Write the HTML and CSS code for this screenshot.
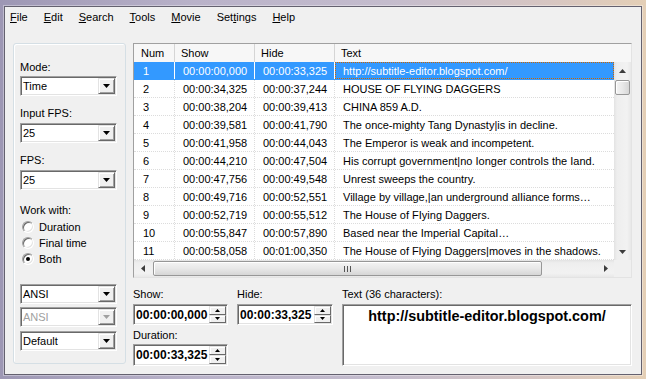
FILE: index.html
```html
<!DOCTYPE html>
<html lang="en">
<head>
    <meta charset="UTF-8">
    <title>Subtitle Workshop</title>
    <link rel="stylesheet" href="styles.css">
</head>
<body>
    <div class="window">
        <!-- menu -->
        <div class="menubar">
            <span><u>F</u>ile</span>
            <span><u>E</u>dit</span>
            <span><u>S</u>earch</span>
            <span><u>T</u>ools</span>
            <span><u>M</u>ovie</span>
            <span>Set<u>t</u>ings</span>
            <span><u>H</u>elp</span>
        </div>

        <div class="main">
            <!-- left options panel -->
            <div class="groupbox">
                <div class="label first">Mode:</div>
                <div class="combo">
                    <span class="value">Time</span>
                    <span class="drop"><svg width="7" height="4"><polygon points="0,0 7,0 3.5,4" fill="#000"/></svg></span>
                </div>
                <div class="label">Input FPS:</div>
                <div class="combo">
                    <span class="value">25</span>
                    <span class="drop"><svg width="7" height="4"><polygon points="0,0 7,0 3.5,4" fill="#000"/></svg></span>
                </div>
                <div class="label">FPS:</div>
                <div class="combo">
                    <span class="value">25</span>
                    <span class="drop"><svg width="7" height="4"><polygon points="0,0 7,0 3.5,4" fill="#000"/></svg></span>
                </div>
                <div class="label work">Work with:</div>
                <div class="radios">
                    <div class="radio"><span class="dot"></span>Duration</div>
                    <div class="radio"><span class="dot"></span>Final time</div>
                    <div class="radio"><span class="dot checked"></span>Both</div>
                </div>
                <div class="encodings">
                    <div class="combo">
                        <span class="value">ANSI</span>
                        <span class="drop"><svg width="7" height="4"><polygon points="0,0 7,0 3.5,4" fill="#000"/></svg></span>
                    </div>
                    <div class="combo disabled">
                        <span class="value">ANSI</span>
                        <span class="drop"><svg width="7" height="4"><polygon points="0,0 7,0 3.5,4" fill="#a0a0a0"/></svg></span>
                    </div>
                    <div class="combo last">
                        <span class="value">Default</span>
                        <span class="drop"><svg width="7" height="4"><polygon points="0,0 7,0 3.5,4" fill="#000"/></svg></span>
                    </div>
                </div>
            </div>

            <div class="right">
                <!-- subtitle list -->
                <div class="listview">
                    <div class="lv-head">
                        <div class="hcell">Num</div>
                        <div class="hcell">Show</div>
                        <div class="hcell">Hide</div>
                        <div class="hcell last">Text</div>
                    </div>
                    <div class="lv-mid">
                        <div class="lv-body">
                            <div class="row sel"><div class="cell num">1</div><div class="cell">00:00:00,000</div><div class="cell">00:00:33,325</div><div class="cell text">http://subtitle-editor.blogspot.com/</div></div>
                            <div class="row"><div class="cell num">2</div><div class="cell">00:00:34,325</div><div class="cell">00:00:37,244</div><div class="cell text">HOUSE OF FLYING DAGGERS</div></div>
                            <div class="row"><div class="cell num">3</div><div class="cell">00:00:38,204</div><div class="cell">00:00:39,413</div><div class="cell text">CHINA 859 A.D.</div></div>
                            <div class="row"><div class="cell num">4</div><div class="cell">00:00:39,581</div><div class="cell">00:00:41,790</div><div class="cell text">The once-mighty Tang Dynasty|is in decline.</div></div>
                            <div class="row"><div class="cell num">5</div><div class="cell">00:00:41,958</div><div class="cell">00:00:44,043</div><div class="cell text">The Emperor is weak and incompetent.</div></div>
                            <div class="row"><div class="cell num">6</div><div class="cell">00:00:44,210</div><div class="cell">00:00:47,504</div><div class="cell text">His corrupt government|no Ionger controIs the Iand.</div></div>
                            <div class="row"><div class="cell num">7</div><div class="cell">00:00:47,756</div><div class="cell">00:00:49,548</div><div class="cell text">Unrest sweeps the country.</div></div>
                            <div class="row"><div class="cell num">8</div><div class="cell">00:00:49,716</div><div class="cell">00:00:52,551</div><div class="cell text">Village by village,|an underground alIiance forms…</div></div>
                            <div class="row"><div class="cell num">9</div><div class="cell">00:00:52,719</div><div class="cell">00:00:55,512</div><div class="cell text">The House of FIying Daggers.</div></div>
                            <div class="row"><div class="cell num">10</div><div class="cell">00:00:55,847</div><div class="cell">00:00:57,890</div><div class="cell text">Based near the ImperiaI CapitaI…</div></div>
                            <div class="row"><div class="cell num">11</div><div class="cell">00:00:58,058</div><div class="cell">00:01:00,350</div><div class="cell text">The House of Flying Daggers|moves in the shadows.</div></div>
                        </div>
                        <div class="vscroll">
                            <div class="arrow"><svg width="7" height="4"><polygon points="3.5,0 7,4 0,4" fill="#3c3c3c"/></svg></div>
                            <div class="vthumb"></div>
                            <div class="arrow bottom"><svg width="7" height="4"><polygon points="0,0 7,0 3.5,4" fill="#3c3c3c"/></svg></div>
                        </div>
                    </div>
                    <div class="lv-foot">
                        <div class="hscroll">
                            <div class="arrow"><svg width="4" height="7"><polygon points="4,0 4,7 0,3.5" fill="#3c3c3c"/></svg></div>
                            <div class="hthumb">
                                <svg width="7" height="6"><rect x="0" y="0" width="1" height="6" fill="#555"/><rect x="3" y="0" width="1" height="6" fill="#555"/><rect x="6" y="0" width="1" height="6" fill="#555"/></svg>
                            </div>
                            <div class="arrow right"><svg width="4" height="7"><polygon points="0,0 4,3.5 0,7" fill="#3c3c3c"/></svg></div>
                        </div>
                        <div class="corner"></div>
                    </div>
                </div>

                <!-- editing fields -->
                <div class="editor">
                    <div class="elabel">Show:</div>
                    <div class="elabel">Hide:</div>
                    <div class="elabel">Text (36 characters):</div>

                    <div class="spin">
                        <span class="time">00:00:00,000</span>
                        <span class="updown">
                            <span class="ud"><svg width="5" height="3"><polygon points="2.5,0 5,3 0,3" fill="#000"/></svg></span>
                            <span class="ud"><svg width="5" height="3"><polygon points="0,0 5,0 2.5,3" fill="#000"/></svg></span>
                        </span>
                    </div>
                    <div class="spin">
                        <span class="time">00:00:33,325</span>
                        <span class="updown">
                            <span class="ud"><svg width="5" height="3"><polygon points="2.5,0 5,3 0,3" fill="#000"/></svg></span>
                            <span class="ud"><svg width="5" height="3"><polygon points="0,0 5,0 2.5,3" fill="#000"/></svg></span>
                        </span>
                    </div>
                    <div class="textbox">http://subtitle-editor.blogspot.com/</div>

                    <div class="elabel dur">Duration:</div>
                    <div class="spin dur-box">
                        <span class="time">00:00:33,325</span>
                        <span class="updown">
                            <span class="ud"><svg width="5" height="3"><polygon points="2.5,0 5,3 0,3" fill="#000"/></svg></span>
                            <span class="ud"><svg width="5" height="3"><polygon points="0,0 5,0 2.5,3" fill="#000"/></svg></span>
                        </span>
                    </div>
                </div>
            </div>
        </div>
    </div>
</body>
</html>
```

FILE: styles.css
```css
/* window frame */
* {
    box-sizing: border-box;
}

body {
    margin: 0;
    width: 646px;
    height: 379px;
    overflow: hidden;
    padding: 6px 0 0 4px;
    background: linear-gradient(90deg, #9d97b4 0%, #b9b2c9 30%, #c4bccd 60%, #d7c6c2 85%, #e4cfb6 100%);
    font-family: "Liberation Sans", Arial, sans-serif;
    font-size: 11px;
    color: #000;
}

.window {
    width: 638px;
    height: 369px;
    background: #f0f0f0;
    border: 1px solid #64616f;
    box-shadow: 0 0 0 1px rgba(255,255,255,0.35);
}

.menubar {
    display: flex;
    gap: 16px;
    height: 20px;
    line-height: 21px;
    padding-left: 5px;
}

.main {
    display: grid;
    grid-template-columns: 113px 499px;
    column-gap: 7px;
    align-items: start;
    padding: 16px 0 0 8px;
}

/* left panel */
.groupbox {
    height: 321px;
    border: 1px solid #d5dfe5;
    border-radius: 3px;
    box-shadow: inset 1px 1px #fff;
    padding: 16px 0 0 6px;
}

.label {
    line-height: 15px;
    height: 15px;
    margin: 10px 0 2px;
}

.label.first {
    margin-top: 0;
    margin-bottom: 1px;
}

.label.work {
    margin-top: 13px;
    margin-bottom: 1px;
}

.combo {
    display: flex;
    width: 97px;
    height: 20px;
    background: #fff;
    border: 1px solid;
    border-color: #a0a0a0 #fff #fff #a0a0a0;
    box-shadow: inset 1px 1px #696969, inset -1px -1px #e3e3e3;
}

.combo .value {
    flex: 1;
    padding-left: 2px;
    line-height: 19px;
}

.drop {
    width: 17px;
    height: 16px;
    margin: 1px 1px 1px 0;
    display: flex;
    align-items: center;
    justify-content: center;
    background: #f0f0f0;
    border: 1px solid;
    border-color: #e3e3e3 #696969 #696969 #e3e3e3;
    box-shadow: inset 1px 1px #fff, inset -1px -1px #a0a0a0;
}

.combo.disabled .value {
    color: #a0a0a0;
}

.radios {
    padding-left: 2px;
}

.radio {
    display: flex;
    align-items: center;
    height: 16px;
    line-height: 17px;
}

.dot {
    position: relative;
    width: 12px;
    height: 12px;
    margin-right: 5px;
    border-radius: 50%;
    background: #fff;
    border: 1px solid;
    border-color: #a0a0a0 #fff #fff #a0a0a0;
    box-shadow: inset 1px 1px #696969, inset -1px -1px #e3e3e3;
}

.dot.checked::after {
    content: "";
    position: absolute;
    left: 3px;
    top: 3px;
    width: 4px;
    height: 4px;
    border-radius: 50%;
    background: #000;
}

.encodings {
    margin-top: 17px;
}

.encodings .combo + .combo {
    margin-top: 3px;
}

.encodings .combo.last {
    margin-top: 4px;
}

/* list view */
.listview {
    height: 235px;
    background: #fff;
    border: 1px solid;
    border-color: #a0a0a0 #e3e3e3 #e3e3e3 #a0a0a0;
}

.lv-head {
    display: grid;
    grid-template-columns: 41px 80px 80px 1fr;
    height: 18px;
    line-height: 19px;
    background: #f7f7f7;
}

.hcell {
    padding-left: 6px;
    border-right: 1px solid #d5d5d5;
}

.hcell:first-child {
    padding-left: 7px;
}

.hcell.last {
    border-right: none;
}

.lv-mid {
    display: flex;
    height: 198px;
}

.lv-body {
    width: 480px;
}

.row {
    display: grid;
    grid-template-columns: 41px 80px 80px 1fr;
    height: 18px;
    border-bottom: 1px dotted #dcdcdc;
}

.cell {
    padding: 1px 0 0 8px;
    line-height: 17px;
    white-space: nowrap;
    overflow: hidden;
    border-right: 1px dotted #dcdcdc;
}

.cell.num {
    padding-left: 9px;
}

.cell.text {
    border-right: none;
}

.row.sel {
    background: #3399ff;
    color: #fff;
    border-bottom-color: #3399ff;
}

.row.sel .cell {
    border-right: 1px solid #fff;
}

.row.sel .cell.text {
    border-right: none;
    outline: 1px dotted #cc6600;
    outline-offset: -1px;
}

.vscroll {
    width: 17px;
    display: flex;
    flex-direction: column;
    background: linear-gradient(90deg, #e3e3e3, #eeeeee 3px, #f2f2f2 13px, #e8e8e8);
}

.vscroll .arrow {
    height: 17px;
    display: flex;
    align-items: center;
    justify-content: center;
}

.vscroll .arrow.bottom {
    margin-top: auto;
}

.vthumb {
    width: 15px;
    height: 15px;
    margin: 1px 0 0 1px;
    border: 1px solid #979797;
    border-radius: 2px;
    background: linear-gradient(90deg, #f4f4f4, #e8e8e8 50%, #d6d6d6);
    box-shadow: inset 1px 1px #fff;
}

.lv-foot {
    display: flex;
    height: 17px;
}

.hscroll {
    width: 480px;
    display: flex;
    align-items: center;
    background: linear-gradient(180deg, #e3e3e3, #eeeeee 3px, #f2f2f2 13px, #e8e8e8);
}

.hscroll .arrow {
    width: 17px;
    height: 17px;
    display: flex;
    align-items: center;
    justify-content: center;
}

.hscroll .arrow.right {
    margin-left: auto;
}

.hthumb {
    width: 389px;
    height: 15px;
    margin-left: 2px;
    display: flex;
    align-items: center;
    justify-content: center;
    border: 1px solid #979797;
    border-radius: 2px;
    background: linear-gradient(180deg, #f4f4f4, #e8e8e8 50%, #d6d6d6);
    box-shadow: inset 1px 1px #fff;
}

.corner {
    width: 17px;
    background: #f0f0f0;
}

/* edit fields */
.editor {
    display: grid;
    grid-template-columns: 95px 96px 1fr;
    grid-template-rows: 18px 23px 17px 22px;
    column-gap: 9px;
    margin-top: 8px;
}

.elabel {
    padding-top: 1px;
    line-height: 15px;
}

.elabel.dur {
    grid-column: 1;
    grid-row: 3;
}

.spin {
    display: flex;
    height: 21px;
    background: #fff;
    border: 1px solid;
    border-color: #a0a0a0 #fff #fff #a0a0a0;
    box-shadow: inset 1px 1px #696969, inset -1px -1px #e3e3e3;
}

.spin.dur-box {
    grid-column: 1;
    grid-row: 4;
    height: 22px;
}

.time {
    flex: 1;
    padding: 1px 0 0 2px;
    font-weight: bold;
    font-size: 12px;
    line-height: 19px;
    white-space: nowrap;
}

.updown {
    width: 17px;
    margin: 1px 1px 1px 0;
    display: flex;
    flex-direction: column;
}

.ud {
    flex: 1;
    display: flex;
    align-items: center;
    justify-content: center;
    background: #f0f0f0;
    border: 1px solid;
    border-color: #e3e3e3 #696969 #696969 #e3e3e3;
    box-shadow: inset 1px 1px #fff;
}

.textbox {
    grid-column: 3;
    grid-row: 2 / span 3;
    background: #fff;
    border: 1px solid;
    border-color: #a0a0a0 #fff #fff #a0a0a0;
    box-shadow: inset 1px 1px #696969, inset -1px -1px #e3e3e3;
    padding-top: 2px;
    text-align: center;
    font-weight: bold;
    font-size: 14.4px;
    line-height: 18px;
}
```
